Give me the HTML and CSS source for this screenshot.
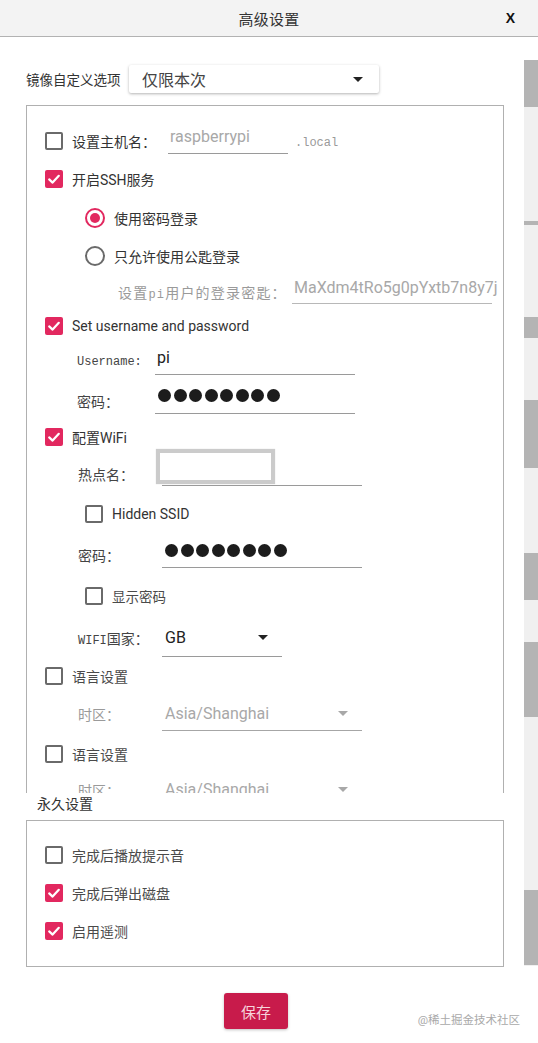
FILE: index.html
```html
<!DOCTYPE html>
<html lang="zh-CN">
<head>
<meta charset="utf-8">
<title>高级设置</title>
<link rel="stylesheet" href="styles.css">
</head>
<body>
<header class="titlebar">
  <span></span>
  <span class="title">高级设置</span>
  <span class="close">X</span>
</header>

<div class="main">
  <div class="content">
    <div class="image-row">
      <span class="image-label">镜像自定义选项</span>
      <div class="combo"><span>仅限本次</span><i class="arrow"></i></div>
    </div>

    <div class="viewport">
      <div class="box box-once">
        <div class="row h38">
          <span class="cb"></span><span class="lbl lbl-host">设置主机名：</span>
          <div class="field text fh26 w-host"><span class="ph">raspberrypi</span></div>
          <span class="mono suffix">.local</span>
        </div>

        <div class="row h38">
          <span class="cb on"><svg viewBox="0 0 18 18"><path d="M4.2 9.4 L7.6 12.6 L13.8 5.8"/></svg></span><span class="lbl">开启SSH服务</span>
        </div>

        <div class="row sub h39">
          <span class="rb on"></span><span class="lbl">使用密码登录</span>
        </div>

        <div class="row sub h37">
          <span class="rb"></span><span class="lbl">只允许使用公匙登录</span>
        </div>

        <div class="row key-row h36">
          <span class="flabel grey w-key spaced">设置<span class="mono">pi</span>用户的登录密匙：</span>
          <div class="field text fh24 w-200 light"><span class="ph">MaXdm4tRo5g0pYxtb7n8y7j</span></div>
        </div>

        <div class="row h31">
          <span class="cb on"><svg viewBox="0 0 18 18"><path d="M4.2 9.4 L7.6 12.6 L13.8 5.8"/></svg></span><span class="lbl">Set username and password</span>
        </div>

        <div class="row frow-a h42">
          <span class="flabel w-78 mono">Username:</span>
          <div class="field text fh26 w-200"><span class="val">pi</span></div>
        </div>

        <div class="row frow-a h36">
          <span class="flabel w-78">密码：</span>
          <div class="field dots fh26 w-200">
            <i></i><i></i><i></i><i></i><i></i><i></i><i></i><i></i>
          </div>
        </div>

        <div class="row h36">
          <span class="cb on"><svg viewBox="0 0 18 18"><path d="M4.2 9.4 L7.6 12.6 L13.8 5.8"/></svg></span><span class="lbl">配置WiFi</span>
        </div>

        <div class="row frow-b h38">
          <span class="flabel w-84">热点名：</span>
          <div class="field text fh24 w-200"><span class="focus-ring"></span></div>
        </div>

        <div class="row sub h41">
          <span class="cb"></span><span class="lbl">Hidden SSID</span>
        </div>

        <div class="row frow-b h42">
          <span class="flabel w-84">密码：</span>
          <div class="field dots dots-b fh26 w-200">
            <i></i><i></i><i></i><i></i><i></i><i></i><i></i><i></i>
          </div>
        </div>

        <div class="row sub h40">
          <span class="cb"></span><span class="lbl soft small">显示密码</span>
        </div>

        <div class="row frow-b h44">
          <span class="flabel w-84"><span class="mono">WIFI</span>国家：</span>
          <div class="field select fh38 w-120"><span class="val">GB</span><i class="arrow"></i></div>
        </div>

        <div class="row h32">
          <span class="cb"></span><span class="lbl soft">语言设置</span>
        </div>

        <div class="row frow-b h44">
          <span class="flabel grey w-84">时区：</span>
          <div class="field select fh34 w-200 disabled"><span class="val">Asia/Shanghai</span><i class="arrow"></i></div>
        </div>

        <div class="row h36">
          <span class="cb"></span><span class="lbl soft">语言设置</span>
        </div>

        <div class="row frow-b h36">
          <span class="flabel grey w-84">时区：</span>
          <div class="field select fh34 w-200 disabled"><span class="val">Asia/Shanghai</span><i class="arrow"></i></div>
        </div>
      </div>
    </div>

    <div class="perm-label">永久设置</div>
    <div class="box box-perm">
      <div class="row h38">
        <span class="cb"></span><span class="lbl soft">完成后播放提示音</span>
      </div>
      <div class="row h38">
        <span class="cb on"><svg viewBox="0 0 18 18"><path d="M4.2 9.4 L7.6 12.6 L13.8 5.8"/></svg></span><span class="lbl soft">完成后弹出磁盘</span>
      </div>
      <div class="row h38">
        <span class="cb on"><svg viewBox="0 0 18 18"><path d="M4.2 9.4 L7.6 12.6 L13.8 5.8"/></svg></span><span class="lbl soft">启用遥测</span>
      </div>
    </div>
  </div>

  <div class="strip">
    <div class="thumb t1"></div>
    <div class="thumb t2"></div>
    <div class="thumb t3"></div>
    <div class="thumb t4"></div>
    <div class="thumb t5"></div>
    <div class="thumb t6"></div>
    <div class="thumb t7"></div>
  </div>
</div>

<footer class="footer">
  <button class="save">保存</button>
  <span class="watermark">@稀土掘金技术社区</span>
</footer>
</body>
</html>
```

FILE: styles.css
```css
* { box-sizing: border-box; }

html, body { margin: 0; padding: 0; background: #fff; }

body {
  width: 538px;
  height: 1043px;
  overflow: hidden;
  font-family: Roboto, "Noto Sans CJK SC", sans-serif;
  font-size: 14px;
  color: #333;
}

/* ---------- title bar ---------- */
.titlebar {
  height: 37px;
  background: #f3f3f3;
  border-bottom: 1px solid #b2b2b2;
  display: grid;
  grid-template-columns: 1fr auto 1fr;
  align-items: center;
}
.title {
  font-size: 15px;
  color: #333;
  letter-spacing: 0.3px;
}
.close {
  justify-self: end;
  margin-right: 23px;
  font-family: "Liberation Sans", Arial, sans-serif;
  font-weight: bold;
  font-size: 14px;
  color: #111;
}

/* ---------- main area ---------- */
.main { display: flex; }

.content {
  width: 524px;
  padding-left: 26px;
  padding-right: 20px;
}

.image-row {
  display: flex;
  align-items: center;
  height: 28px;
  margin-top: 28px;
}
.image-label {
  width: 103px;
  font-size: 13.5px;
  color: #333;
}
.combo {
  width: 250px;
  height: 28px;
  display: flex;
  align-items: center;
  justify-content: space-between;
  padding: 0 16px 0 13px;
  border-radius: 2px;
  box-shadow: 0 1px 3px rgba(0, 0, 0, 0.3);
  font-size: 16px;
  color: #444;
}

.arrow {
  width: 0;
  height: 0;
  border-left: 5px solid transparent;
  border-right: 5px solid transparent;
  border-top: 5px solid #222;
}

.viewport {
  margin-top: 12px;
  height: 688px;
  overflow: hidden;
}

.box { border: 1px solid #b0b0b0; }
.box-once {
  border-bottom: none;
  padding-top: 16px;
}

/* ---------- rows ---------- */
.row {
  display: flex;
  align-items: center;
  padding-left: 18px;
}
.row.sub { padding-left: 58px; }
.row.frow-a { padding-left: 50px; }
.row.frow-b { padding-left: 51px; }
.row.key-row { padding-left: 91px; }

.h31 { height: 31px; }
.h32 { height: 32px; }
.h36 { height: 36px; }
.h37 { height: 37px; }
.h38 { height: 38px; }
.h39 { height: 39px; }
.h40 { height: 40px; }
.h41 { height: 41px; }
.h42 { height: 42px; }
.h44 { height: 44px; }

.lbl {
  margin-left: 9px;
  font-size: 14px;
  color: #333;
}
.lbl.soft { color: #4a4a4a; }
.lbl.small { font-size: 13.5px; }
.lbl-host { width: 96px; }

.flabel {
  font-size: 14px;
  color: #444;
  flex: none;
}
.flabel.grey { color: #9a9a9a; }
.flabel.spaced { letter-spacing: 1.2px; }
.w-78 { width: 78px; }
.w-84 { width: 84px; }
.w-key { width: 174px; }

.mono {
  font-family: "Liberation Mono", "Noto Sans CJK SC", monospace;
  font-size: 12px;
}
.flabel.mono { font-size: 12px; }

.suffix {
  margin-left: 7px;
  color: #9a9a9a;
  padding-top: 3px;
}

/* ---------- checkbox / radio ---------- */
.cb {
  width: 18px;
  height: 18px;
  flex: none;
  border: 2px solid #6a6a6a;
  border-radius: 2px;
}
.cb.on {
  border: none;
  background: #e2285f;
}
.cb svg {
  display: block;
  width: 18px;
  height: 18px;
}
.cb svg path {
  fill: none;
  stroke: #fff;
  stroke-width: 2.2;
  stroke-linecap: round;
  stroke-linejoin: round;
}

.rb {
  width: 20px;
  height: 20px;
  flex: none;
  border: 2px solid #6a6a6a;
  border-radius: 50%;
  display: flex;
  align-items: center;
  justify-content: center;
}
.rb.on { border-color: #e2285f; }
.rb.on::after {
  content: "";
  width: 10px;
  height: 10px;
  border-radius: 50%;
  background: #e2285f;
}

/* ---------- fields ---------- */
.field {
  display: flex;
  align-items: center;
  border-bottom: 1px solid #9a9a9a;
  position: relative;
  flex: none;
}
.field.light { border-bottom-color: #b8b8b8; }
.field.text { padding: 0 0 8px 2px; }
.fh24 { height: 24px; }
.fh26 { height: 26px; }
.fh34 { height: 34px; }
.fh38 { height: 38px; }
.w-host { width: 120px; }
.w-200 { width: 200px; }
.w-120 { width: 120px; }

.ph {
  font-size: 16px;
  color: #a8a8a8;
  white-space: nowrap;
}
.val {
  font-size: 16px;
  color: #222;
}

.dots {
  align-items: flex-start;
  padding: 1px 0 0 3px;
  gap: 2.5px;
}
.dots-b { padding: 2px 0 0 3px; }
.dots i {
  width: 13px;
  height: 13px;
  border-radius: 50%;
  background: #1c1c1c;
}

.select {
  justify-content: space-between;
  padding: 0 14px 0 3px;
}
.select.disabled .val { color: #a8a8a8; }
.select.disabled .arrow { border-top-color: #a8a8a8; }
.field.select.disabled { border-bottom-color: #a6a6a6; }

.focus-ring {
  position: absolute;
  left: -6px;
  top: -13px;
  width: 119px;
  height: 35px;
  border: 4px solid #cbcbcb;
  background: #fff;
  box-shadow: 0 0 1px #d4d4d4;
}

/* ---------- permanent settings ---------- */
.perm-label {
  height: 22px;
  line-height: 22px;
  padding-left: 11px;
  font-size: 14px;
  color: #333;
}
.box-perm {
  margin-top: 5px;
  padding: 15px 0 16px;
}

/* ---------- scroll strip ---------- */
.strip {
  width: 14px;
  height: 906px;
  margin-top: 23px;
  background: #f0f0f0;
  display: flex;
  flex-direction: column;
}
.thumb { background: #b4b4b4; flex: none; }
.t1 { height: 47px; }
.t2 { height: 4px; margin-top: 114px; }
.t3 { height: 21px; margin-top: 92px; }
.t4 { height: 68px; margin-top: 62px; }
.t5 { height: 47px; margin-top: 85px; }
.t6 { height: 75px; margin-top: 42px; }
.t7 { height: 75px; margin-top: 173px; }

/* ---------- footer ---------- */
.footer {
  display: flex;
  align-items: flex-start;
  padding-top: 26px;
}
.save {
  margin-left: 224px;
  width: 64px;
  height: 36px;
  border: none;
  border-radius: 3px;
  background: #c81b4b;
  color: #f6d3dc;
  font-family: "Noto Sans CJK SC", sans-serif;
  font-size: 15px;
  padding: 0;
  box-shadow: 0 1px 3px rgba(0, 0, 0, 0.25);
}
.watermark {
  margin-left: auto;
  margin-right: 18px;
  margin-top: 19px;
  font-size: 11.5px;
  line-height: 16px;
  color: #a9a9a9;
}
```
